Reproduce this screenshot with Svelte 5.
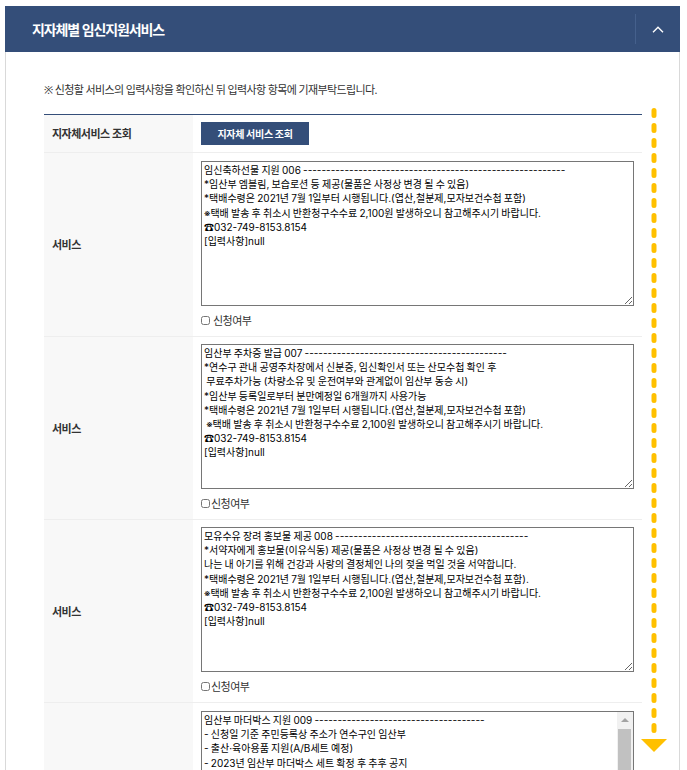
<script>
  const d = (n) => '-'.repeat(n);
  const rows = [
    {
      tight: false,
      text: `임신축하선물 지원 006 ${d(57)}
*임산부 엠블림, 보습로션 등 제공(물품은 사정상 변경 될 수 있음)
*택배수령은 2021년 7월 1일부터 시행됩니다.(엽산,철분제,모자보건수첩 포함)
※택배 발송 후 취소시 반환청구수수료 2,100원 발생하오니 참고해주시기 바랍니다.
☎032-749-8153.8154
[입력사항]null`
    },
    {
      tight: true,
      text: `임산부 주차증 발급 007 ${d(44)}
*연수구 관내 공영주차장에서 신분증, 임신확인서 또는 산모수첩 확인 후
 무료주차가능 (차량소유 및 운전여부와 관계없이 임산부 동승 시)
*임산부 등록일로부터 분만예정일 6개월까지 사용가능
*택배수령은 2021년 7월 1일부터 시행됩니다.(엽산,철분제,모자보건수첩 포함)
 ※택배 발송 후 취소시 반환청구수수료 2,100원 발생하오니 참고해주시기 바랍니다.
☎032-749-8153.8154
[입력사항]null`
    },
    {
      tight: true,
      text: `모유수유 장려 홍보물 제공 008 ${d(42)}
*서약자에게 홍보물(이유식동) 제공(물품은 사정상 변경 될 수 있음)
나는 내 아기를 위해 건강과 사랑의 결정체인 나의 젖을 먹일 것을 서약합니다.
*택배수령은 2021년 7월 1일부터 시행됩니다.(엽산,철분제,모자보건수첩 포함).
※택배 발송 후 취소시 반환청구수수료 2,100원 발생하오니 참고해주시기 바랍니다.
☎032-749-8153.8154
[입력사항]null`
    }
  ];
  const last = `임산부 마더박스 지원 009 ${d(37)}
- 신청일 기준 주민등록상 주소가 연수구인 임산부
- 출산·육아용품 지원(A/B세트 예정)
- 2023년 임산부 마더박스 세트 확정 후 추후 공지`;
</script>

<div class="page">
  <section class="panel">
    <header class="bar">
      <h2>지자체별 임신지원서비스</h2>
      <div class="toggle">
        <svg width="12" height="7" viewBox="0 0 12 7"><path d="M1 6.2 6 1.2l5 5" fill="none" stroke="#fff" stroke-width="1.4" /></svg>
      </div>
    </header>
    <div class="body">
      <p class="note">※ 신청할 서비스의 입력사항을 확인하신 뒤 입력사항 항목에 기재부탁드립니다.</p>
      <div class="table">
        <div class="row first">
          <div class="th">지자체서비스 조회</div>
          <div class="td lookup"><button type="button">지자체 서비스 조회</button></div>
        </div>
        {#each rows as row}
          <div class="row">
            <div class="th">서비스</div>
            <div class="td" class:snug={row.tight}>
              <textarea readonly spellcheck="false" value={row.text}></textarea>
              <label class="check" class:tight={row.tight}><input type="checkbox" /><span>신청여부</span></label>
            </div>
          </div>
        {/each}
        <div class="row">
          <div class="th"></div>
          <div class="td">
            <div class="scrollwrap">
              <textarea readonly spellcheck="false" class="scrolling" value={last}></textarea>
              <div class="scrollbar">
                <span class="up"></span>
                <span class="thumb"></span>
              </div>
            </div>
          </div>
        </div>
      </div>
    </div>
  </section>
  <svg class="guide" width="30" height="650" viewBox="0 0 30 650">
    <line x1="15" y1="3.5" x2="15" y2="624" stroke="#ffc000" stroke-width="5" stroke-linecap="round" stroke-dasharray="5 10" />
    <path d="M2 632h26l-13 13z" fill="#ffc000" />
  </svg>
</div>

<style>
  :global(html), :global(body) {
    margin: 0;
    height: 770px;
    overflow: hidden;
    background: #fff;
  }
  .page {
    position: relative;
    height: 770px;
    overflow: hidden;
    padding: 6px 7px 0 5px;
    box-sizing: border-box;
    font-family: "Noto Sans", "Noto Sans CJK KR", sans-serif;
    color: #222;
  }
  .panel {
    border: solid #d9d9d9;
    border-width: 0 1px;
    min-height: 800px;
  }
  .bar {
    height: 46px;
    margin: 0 -1px;
    background: #344e79;
    display: flex;
    align-items: center;
    justify-content: space-between;
    padding-left: 27px;
  }
  h2 {
    margin: 0;
    color: #fff;
    font-size: 14px;
    font-weight: 700;
    letter-spacing: -1.1px;
  }
  .toggle {
    width: 44px;
    height: 30px;
    border-left: 1px solid #45608c;
    display: flex;
    align-items: center;
    justify-content: center;
  }
  .body {
    padding: 29px 37px 0 38px;
  }
  .note {
    margin: 0 0 15px;
    height: 18px;
    line-height: 18px;
    font-size: 11px;
    letter-spacing: -0.62px;
    color: #333;
  }
  .table {
    border-top: 1px solid #344e79;
  }
  .row {
    display: grid;
    grid-template-columns: 149px 1fr;
    border-bottom: 1px solid #eee;
  }
  .th {
    background: #f8f8f8;
    display: flex;
    align-items: center;
    padding: 0 0 1px 8px;
    font-size: 11px;
    font-weight: 700;
    letter-spacing: -0.5px;
    color: #333;
  }
  .td {
    padding: 8px 8px 8px;
    min-width: 0;
  }
  .td.snug {
    padding-top: 7px;
  }
  .lookup {
    padding: 7px 8px 7px;
    height: 23px;
  }
  button {
    display: block;
    width: 108px;
    height: 23px;
    border: 0;
    padding: 0;
    background: #344e79;
    color: #fff;
    font: 700 10px "Noto Sans CJK KR", sans-serif;
    letter-spacing: -0.3px;
  }
  textarea {
    display: block;
    box-sizing: border-box;
    width: 433px;
    height: 145px;
    margin: 0;
    padding: 1px 2px;
    border: 1px solid #767676;
    border-radius: 0;
    outline: 0;
    background: #fff;
    color: #000;
    font: 10px/14.2px Inter, "Noto Sans CJK KR", sans-serif;
    letter-spacing: 0;
    word-spacing: -0.6px;
    white-space: pre-wrap;
  }
  .scrollwrap {
    position: relative;
  }
  .scrolling {
    overflow: hidden;
    resize: none;
  }
  .scrollbar {
    position: absolute;
    top: 1px;
    right: 1px;
    width: 16px;
    height: 143px;
    background: #f1f1f1;
  }
  .up {
    position: absolute;
    top: 6px;
    left: 4px;
    width: 0;
    height: 0;
    border: solid transparent;
    border-width: 0 4px 4px;
    border-bottom-color: #a3a3a3;
  }
  .thumb {
    position: absolute;
    top: 17px;
    left: 1px;
    right: 2px;
    bottom: 0;
    background: #c1c1c1;
  }
  .check {
    display: flex;
    align-items: center;
    gap: 2px;
    height: 16px;
    margin-top: 6px;
    font-size: 11px;
    letter-spacing: -0.5px;
    color: #333;
  }
  .check input {
    width: 9px;
    height: 9px;
    margin: 0 1px 0 0;
  }
  .check.tight {
    gap: 0;
  }
  .guide {
    position: absolute;
    left: 639px;
    top: 107px;
  }
</style>
